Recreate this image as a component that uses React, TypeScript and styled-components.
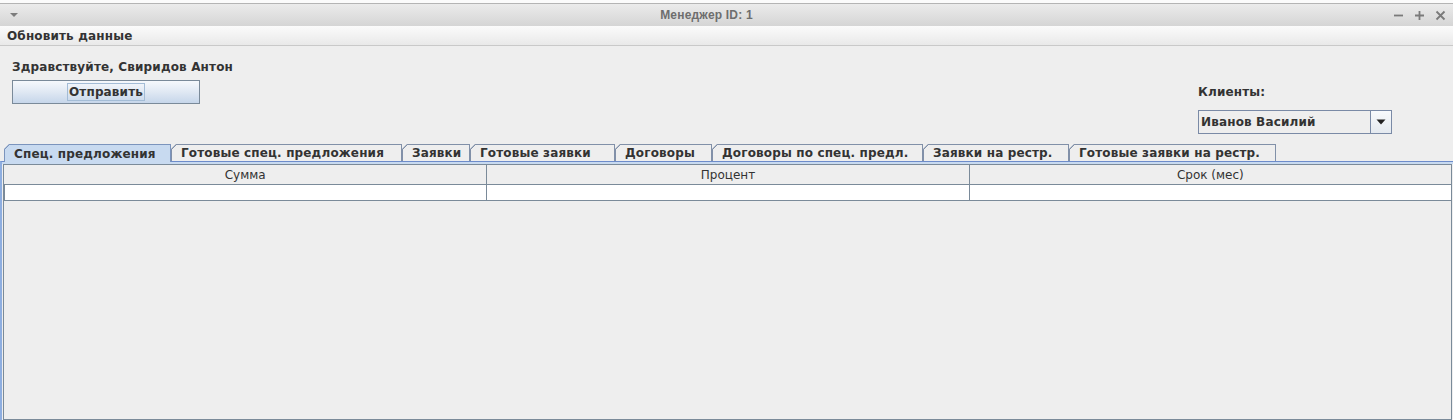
import React from "react";
import styled, { createGlobalStyle } from "styled-components";

const Global = createGlobalStyle`
  html, body { margin: 0; padding: 0; background: #eeeeee; overflow: hidden; }
  #root { width: 1453px; height: 420px; }
`;

const FONT = `"DejaVu Sans", "Noto Sans", sans-serif`;

const Window = styled.div`
  width: 1453px;
  height: 420px;
  display: flex;
  flex-direction: column;
  background: #eeeeee;
  font-family: ${FONT};
  color: #333333;
  letter-spacing: 0.15px;
`;

const Leak = styled.div`
  height: 3px;
  background: #fbfbfb;
  border-bottom: 1px solid #b4b4b4;
  flex: none;
`;

const TitleBar = styled.div`
  height: 22px;
  flex: none;
  display: grid;
  grid-template-columns: 1fr auto 1fr;
  align-items: center;
  background: linear-gradient(#ebebeb, #d5d5d5);
  padding: 0 7px 0 9px;
`;

const TitleText = styled.div`
  font-family: "Liberation Sans", ${FONT};
  font-weight: bold;
  font-size: 12px;
  letter-spacing: 0.2px;
  color: #6e6e6e;
  padding-right: 42px;
`;

const WinControls = styled.div`
  justify-self: end;
  display: flex;
  gap: 10px;
  align-items: center;
`;

const MenuBar = styled.div`
  height: 19px;
  flex: none;
  display: flex;
  align-items: center;
  background: linear-gradient(#fbfbfb, #e9e9e9);
  border-bottom: 1px solid #c9c9c9;
`;

const MenuItem = styled.div`
  font-weight: bold;
  font-size: 12px;
  padding-left: 7px;
  color: #333333;
`;

const TopArea = styled.div`
  display: flex;
  justify-content: space-between;
  align-items: flex-start;
  padding: 13px 61px 0 12px;
  flex: none;
`;

const Column = styled.div<{ $top?: number }>`
  display: flex;
  flex-direction: column;
  padding-top: ${(p) => p.$top ?? 0}px;
`;

const Label = styled.div<{ $gap: number }>`
  font-weight: bold;
  font-size: 12px;
  line-height: 16px;
  margin-bottom: ${(p) => p.$gap}px;
`;

const Button = styled.div`
  width: 188px;
  height: 24px;
  box-sizing: border-box;
  border: 1px solid #7a8a99;
  background: linear-gradient(#f6f9fc, #e2eaf4 45%, #c6d6ea);
  display: flex;
  align-items: center;
  justify-content: center;
`;

const FocusRing = styled.span`
  font-weight: bold;
  font-size: 12px;
  line-height: 16px;
  padding: 0 1px;
  border: 1px solid #a3bcd6;
`;

const Combo = styled.div`
  width: 194px;
  height: 24px;
  box-sizing: border-box;
  border: 1px solid #7a8aa6;
  display: flex;
  background: #eeeeee;
`;

const ComboText = styled.div`
  flex: 1;
  display: flex;
  align-items: center;
  padding-left: 2px;
  font-weight: bold;
  font-size: 12px;
`;

const ComboArrow = styled.div`
  width: 20px;
  border-left: 1px solid #7a8aa6;
  background: linear-gradient(#f8fafc, #e4e9ef);
  display: flex;
  align-items: center;
  justify-content: center;
`;

const TabRow = styled.div`
  display: flex;
  align-items: flex-end;
  padding-left: 4px;
  margin-top: 10px;
  height: 17px;
  flex: none;
  position: relative;
  z-index: 1;
`;

const Tab = styled.div<{ $active?: boolean; $w: number }>`
  width: ${(p) => p.$w}px;
  flex: none;
  height: ${(p) => (p.$active ? 18 : 17)}px;
  margin-bottom: ${(p) => (p.$active ? -1 : 0)}px;
  box-sizing: border-box;
  padding: 0 0 0 9px;
  display: flex;
  align-items: center;
  font-weight: bold;
  font-size: 12px;
  white-space: nowrap;
  overflow: hidden;
  color: #333333;
  border: 1px solid ${(p) => (p.$active ? "#7b94bd" : "#8190a8")};
  border-bottom: none;
  clip-path: polygon(0 5px, 5px 0, 100% 0, 100% 100%, 0 100%);
  background-origin: border-box;
  background-image: linear-gradient(
    135deg,
    transparent 3.3px,
    ${(p) => (p.$active ? "#7b94bd" : "#8190a8")} 3.3px,
    ${(p) => (p.$active ? "#7b94bd" : "#8190a8")} 4.4px,
    ${(p) => (p.$active ? "#c8daf0" : "#eeeeee")} 4.4px
  );
`;

const TabPanel = styled.div`
  flex: 1;
  display: flex;
  flex-direction: column;
  border-top: 1px solid #6d8ccb;
  border-left: 2px solid #8eaee0;
  box-shadow: inset 0 2px 0 #c8daf0;
  padding: 2px 1px 0 1px;
`;

const ScrollPane = styled.div`
  flex: 1;
  border: 1px solid #7a8a99;
  display: flex;
  flex-direction: column;
  background: #eeeeee;
`;

const Grid = styled.div`
  display: grid;
  grid-template-columns: 1fr 1fr 1fr;
`;

const HeadCell = styled.div`
  height: 19px;
  border-bottom: 1px solid #7a8a99;
  border-left: 1px solid #7a8a99;
  &:first-child { border-left: none; }
  display: flex;
  align-items: center;
  justify-content: center;
  font-size: 12px;
  letter-spacing: 0;
  color: #333333;
  background: #eeeeee;
`;

const BodyCell = styled.div`
  height: 15px;
  background: #ffffff;
  border-bottom: 1px solid #7a8a99;
  border-left: 1px solid #7a8a99;
  &:first-child { border-left: none; }
`;

const tabs: { label: string; w: number }[] = [
  { label: "Спец. предложения", w: 167 },
  { label: "Готовые спец. предложения", w: 231 },
  { label: "Заявки", w: 68 },
  { label: "Готовые заявки", w: 145 },
  { label: "Договоры", w: 97 },
  { label: "Договоры по спец. предл.", w: 211 },
  { label: "Заявки на рестр.", w: 146 },
  { label: "Готовые заявки на рестр.", w: 207 },
];

const columns = ["Сумма", "Процент", "Срок (мес)"];

export default function App() {
  return (
    <>
      <Global />
      <Window>
        <Leak />
        <TitleBar>
          <svg width="10" height="8" viewBox="0 0 10 8">
            <path d="M1 2 L9 2 L5 6 Z" fill="#7c7c7c" />
          </svg>
          <TitleText>Менеджер ID: 1</TitleText>
          <WinControls>
            <svg width="11" height="11" viewBox="0 0 11 11">
              <path d="M1 5.5 H10" stroke="#7a7a7a" strokeWidth="1.8" />
            </svg>
            <svg width="11" height="11" viewBox="0 0 11 11">
              <path d="M1 5.5 H10 M5.5 1 V10" stroke="#7a7a7a" strokeWidth="1.8" />
            </svg>
            <svg width="11" height="11" viewBox="0 0 11 11">
              <path d="M1.5 1.5 L9.5 9.5 M9.5 1.5 L1.5 9.5" stroke="#7a7a7a" strokeWidth="1.8" />
            </svg>
          </WinControls>
        </TitleBar>
        <MenuBar>
          <MenuItem>Обновить данные</MenuItem>
        </MenuBar>
        <TopArea>
          <Column>
            <Label $gap={5}>Здравствуйте, Свиридов Антон</Label>
            <Button>
              <FocusRing>Отправить</FocusRing>
            </Button>
          </Column>
          <Column $top={25}>
            <Label $gap={10}>Клиенты:</Label>
            <Combo>
              <ComboText>Иванов Василий</ComboText>
              <ComboArrow>
                <svg width="10" height="6" viewBox="0 0 10 6">
                  <path d="M0.5 0.5 H9.5 L5 5.5 Z" fill="#222" />
                </svg>
              </ComboArrow>
            </Combo>
          </Column>
        </TopArea>
        <TabRow>
          {tabs.map((t, i) => (
            <Tab key={t.label} $active={i === 0} $w={t.w}>
              {t.label}
            </Tab>
          ))}
        </TabRow>
        <TabPanel>
          <ScrollPane>
            <Grid>
              {columns.map((c) => (
                <HeadCell key={c}>{c}</HeadCell>
              ))}
              {columns.map((c) => (
                <BodyCell key={c} />
              ))}
            </Grid>
          </ScrollPane>
        </TabPanel>
      </Window>
    </>
  );
}
